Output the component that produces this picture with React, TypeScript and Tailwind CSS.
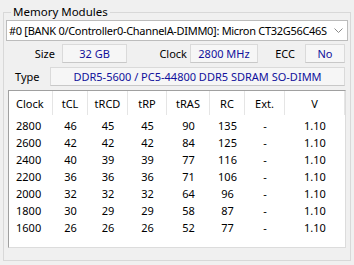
const font = { fontFamily: '"Noto Sans", "Segoe UI", sans-serif' };

const headers = ['Clock', 'tCL', 'tRCD', 'tRP', 'tRAS', 'RC', 'Ext.', 'V'];

const rows = [
  ['2800', '46', '45', '45', '90', '135', '-', '1.10'],
  ['2600', '42', '42', '42', '84', '125', '-', '1.10'],
  ['2400', '40', '39', '39', '77', '116', '-', '1.10'],
  ['2200', '36', '36', '36', '71', '106', '-', '1.10'],
  ['2000', '32', '32', '32', '64', '96', '-', '1.10'],
  ['1800', '30', '29', '29', '58', '87', '-', '1.10'],
  ['1600', '26', '26', '26', '52', '77', '-', '1.10'],
];

function ValueBox({ children, className }: { children: React.ReactNode; className: string }) {
  return (
    <div
      className={`h-[19px] flex items-center justify-center bg-[#f6f6f6] border border-[#dadada] border-b-[#c8c8c8] text-[#10109c] ${className}`}
    >
      {children}
    </div>
  );
}

export default function App() {
  return (
    <div className="w-[354px] h-[265px] bg-[#f0f0f0] text-[11px] leading-[16px] text-black overflow-hidden" style={font}>
      <fieldset className="ml-[3px] mt-[4px] w-[348px] min-w-0 h-[257px] border border-[#d8d8d8] px-[2px]">
        <legend className="ml-[5px] px-[2px] text-[11.5px]">Memory Modules</legend>

        {/* module selector */}
        <div className="h-[21px] bg-white border border-[#bcbcbc] flex items-center">
          <div className="flex-1 min-w-0 pl-[2px] overflow-hidden whitespace-nowrap tracking-[-0.3px]">
            #0 [BANK 0/Controller0-ChannelA-DIMM0]: Micron CT32G56C46S
          </div>
          <div className="w-[17px] shrink-0 flex items-center justify-center">
            <svg width="9" height="5" viewBox="0 0 9 5">
              <path d="M0.5 0.5 L4.5 4.5 L8.5 0.5" fill="none" stroke="#8a8a8a" strokeWidth="1" />
            </svg>
          </div>
        </div>

        <div className="flex items-center mt-[3px]">
          <div className="w-[49px] text-right">Size</div>
          <ValueBox className="ml-[7px] w-[65px]">32 GB</ValueBox>
          <div className="w-[63px] text-right pr-[3px]">Clock</div>
          <ValueBox className="w-[68px]">2800 MHz</ValueBox>
          <div className="w-[47px] text-right pr-[10px]">ECC</div>
          <ValueBox className="w-[40px]">No</ValueBox>
        </div>

        <div className="flex items-center mt-[4px]">
          <div className="w-[44px] pl-[9px]">Type</div>
          <ValueBox className="w-[295px]">DDR5-5600 / PC5-44800 DDR5 SDRAM SO-DIMM</ValueBox>
        </div>

        <div className="mx-[2px] mt-[4px] h-[158px] bg-white border border-[#a0a0a0] border-r-[#dcdcdc] border-b-[#dcdcdc]">
          <div className="grid grid-cols-[44px_35px_40px_39px_43px_35px_40px_1fr] h-[24px]">
            {headers.map((h, i) => (
              <div
                key={h}
                className={`flex items-center pt-[2px] border-r border-[#e5e5e5] ${i === 0 ? 'pl-[7px]' : 'justify-center'}`}
              >
                {h}
              </div>
            ))}
          </div>
          <div className="pt-[2px]">
            {rows.map((r) => (
              <div key={r[0]} className="grid grid-cols-[44px_35px_40px_39px_43px_35px_40px_1fr] h-[17px]">
                {r.map((v, i) => (
                  <div key={i} className={`flex items-center ${i === 0 ? 'pl-[7px]' : 'justify-center'}`}>
                    {v}
                  </div>
                ))}
              </div>
            ))}
          </div>
        </div>
      </fieldset>
    </div>
  );
}
